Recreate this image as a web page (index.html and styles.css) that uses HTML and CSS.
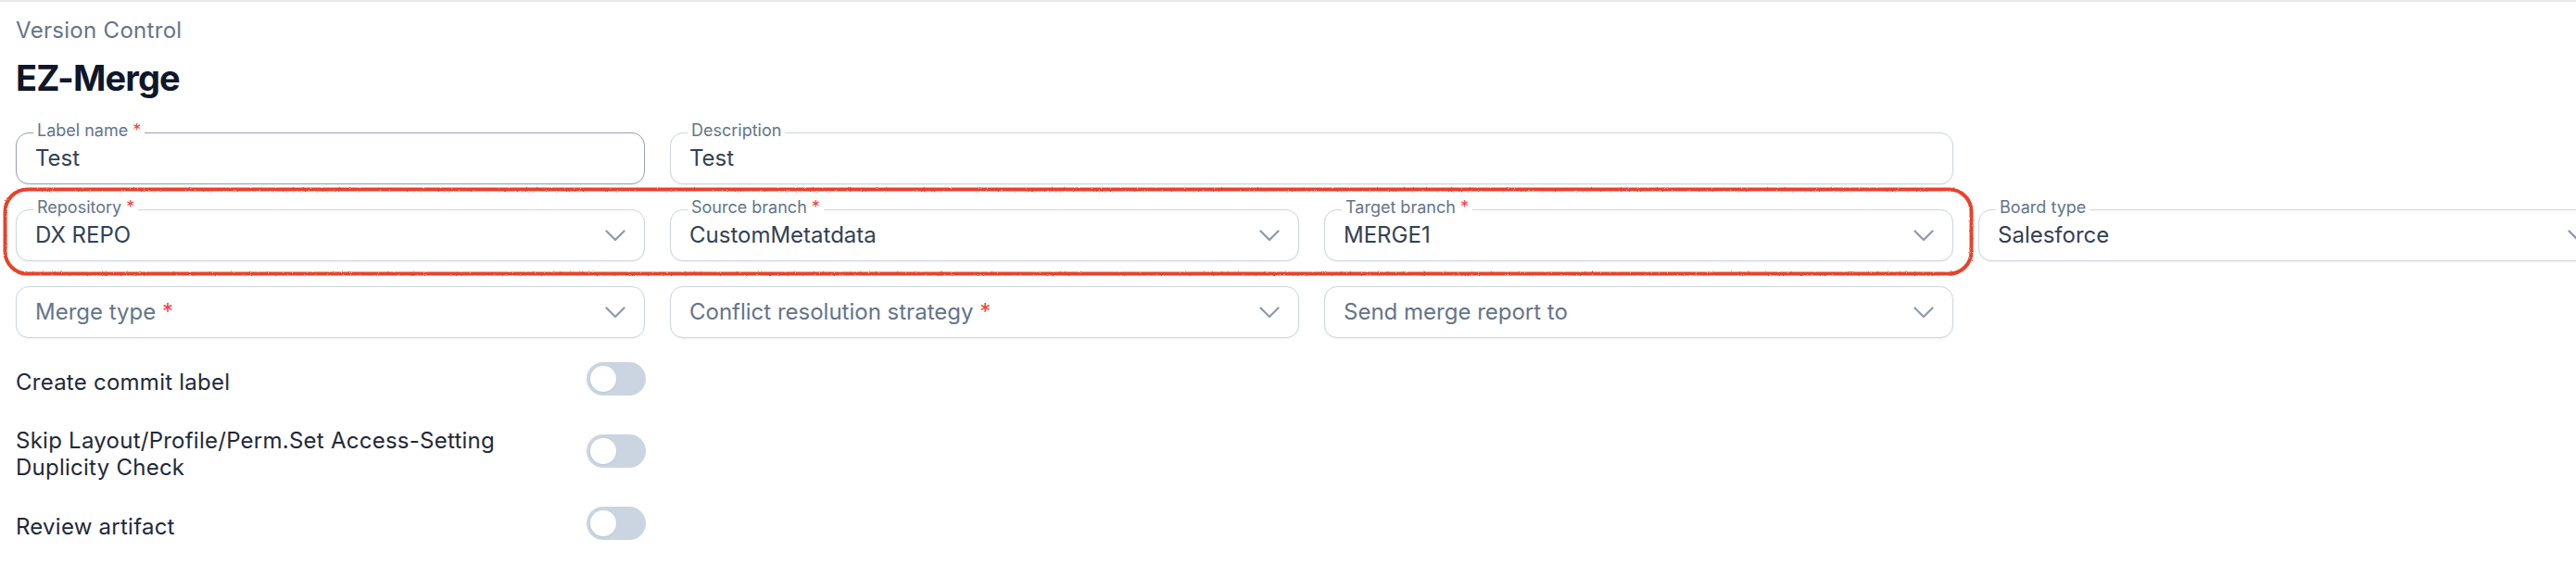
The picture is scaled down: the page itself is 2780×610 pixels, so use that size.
FILE: index.html
```html
<!DOCTYPE html>
<html lang="en">
<head>
<meta charset="utf-8">
<title>EZ-Merge</title>
<link rel="stylesheet" href="styles.css">
</head>
<body>
<div class="page">
  <div class="crumb">Version Control</div>
  <h1 class="title">EZ-Merge</h1>

  <div class="grid">
    <div class="field field-active">
      <span class="flabel">Label name <em>*</em></span>
      <span class="value">Test</span>
    </div>
    <div class="field span2">
      <span class="flabel">Description</span>
      <span class="value">Test</span>
    </div>

    <div class="field newrow">
      <span class="flabel">Repository <em>*</em></span>
      <span class="value">DX REPO</span>
      <svg class="chev" viewBox="0 0 22 13" width="22" height="13"><path d="M1.5 1.5 L11 11 L20.5 1.5"/></svg>
    </div>
    <div class="field">
      <span class="flabel">Source branch <em>*</em></span>
      <span class="value">CustomMetatdata</span>
      <svg class="chev" viewBox="0 0 22 13" width="22" height="13"><path d="M1.5 1.5 L11 11 L20.5 1.5"/></svg>
    </div>
    <div class="field">
      <span class="flabel">Target branch <em>*</em></span>
      <span class="value">MERGE1</span>
      <svg class="chev" viewBox="0 0 22 13" width="22" height="13"><path d="M1.5 1.5 L11 11 L20.5 1.5"/></svg>
    </div>
    <div class="field">
      <span class="flabel">Board type</span>
      <span class="value">Salesforce</span>
      <svg class="chev" viewBox="0 0 22 13" width="22" height="13"><path d="M1.5 1.5 L11 11 L20.5 1.5"/></svg>
    </div>

    <div class="field newrow">
      <span class="placeholder">Merge type <em>*</em></span>
      <svg class="chev" viewBox="0 0 22 13" width="22" height="13"><path d="M1.5 1.5 L11 11 L20.5 1.5"/></svg>
    </div>
    <div class="field">
      <span class="placeholder">Conflict resolution strategy <em>*</em></span>
      <svg class="chev" viewBox="0 0 22 13" width="22" height="13"><path d="M1.5 1.5 L11 11 L20.5 1.5"/></svg>
    </div>
    <div class="field">
      <span class="placeholder">Send merge report to</span>
      <svg class="chev" viewBox="0 0 22 13" width="22" height="13"><path d="M1.5 1.5 L11 11 L20.5 1.5"/></svg>
    </div>
  </div>

  <div class="toggles">
    <div class="trow">
      <span class="tlabel">Create commit label</span>
      <span class="switch"><span class="knob"></span></span>
    </div>
    <div class="trow">
      <span class="tlabel">Skip Layout/Profile/Perm.Set Access-Setting Duplicity Check</span>
      <span class="switch"><span class="knob"></span></span>
    </div>
    <div class="trow">
      <span class="tlabel">Review artifact</span>
      <span class="switch"><span class="knob"></span></span>
    </div>
  </div>

  <svg class="annot" viewBox="0 0 2128 96" width="2128" height="96">
    <defs>
      <filter id="rough" x="-1%" y="-10%" width="102%" height="120%">
        <feTurbulence type="fractalNoise" baseFrequency="0.9" numOctaves="2" seed="3" result="n"/>
        <feDisplacementMap in="SourceGraphic" in2="n" scale="2.2"/>
      </filter>
    </defs>
    <rect x="2.5" y="2.5" width="2122" height="91" rx="24" ry="24" filter="url(#rough)"/>
  </svg>
</div>
</body>
</html>
```

FILE: styles.css
```css
html, body {
  margin: 0;
  padding: 0;
  background: #ffffff;
  overflow: hidden;
}

body {
  font-family: "Inter", "Noto Sans", "Liberation Sans", sans-serif;
  border-top: 2px solid #e6e8ec;
}

.page {
  position: relative;
  padding: 15px 0 0 17px;
}

.crumb {
  font-size: 24px;
  line-height: 32px;
  color: #64748b;
  letter-spacing: 0.3px;
}

.title {
  margin: 11px 0 0;
  font-size: 38px;
  line-height: 48px;
  font-weight: 700;
  color: #0f172a;
  letter-spacing: -0.9px;
}

.grid {
  margin-top: 35px;
  display: grid;
  grid-template-columns: repeat(4, 679px);
  grid-auto-rows: 56px;
  column-gap: 27px;
  row-gap: 27px;
}

.span2 {
  grid-column: span 2;
}

.newrow {
  grid-column-start: 1;
}

.field {
  position: relative;
  box-sizing: border-box;
  height: 56px;
  border: 1px solid #cbd5e1;
  border-radius: 14px;
  background: #ffffff;
  box-shadow: 0 1px 2px rgba(15, 23, 42, 0.06);
  display: flex;
  align-items: center;
  justify-content: space-between;
  padding: 0 20px;
}

.field-active {
  border-color: #94a3b8;
}

.flabel {
  position: absolute;
  top: -14px;
  left: 18px;
  padding: 0 4px;
  background: #ffffff;
  font-size: 18px;
  line-height: 22px;
  color: #64748b;
  white-space: nowrap;
}

.flabel em,
.placeholder em {
  font-style: normal;
  color: #ef4444;
}

.value {
  font-size: 24px;
  line-height: 30px;
  color: #334155;
  white-space: nowrap;
}

.placeholder {
  font-size: 24px;
  line-height: 30px;
  color: #64748b;
  white-space: nowrap;
}

.chev {
  flex: none;
  fill: none;
  stroke: #8f9bb0;
  stroke-width: 2.3;
  stroke-linecap: round;
  stroke-linejoin: round;
}

.toggles {
  margin-top: 26px;
  width: 680px;
  display: flex;
  flex-direction: column;
  gap: 28px;
}

.trow {
  display: flex;
  align-items: center;
  justify-content: space-between;
  gap: 56px;
}

.tlabel {
  flex: 1;
  padding-top: 6px;
  font-size: 24px;
  line-height: 29px;
  color: #1e293b;
  letter-spacing: 0.25px;
}

.switch {
  flex: none;
  box-sizing: border-box;
  width: 64px;
  height: 36px;
  border-radius: 18px;
  background: #cbd5e1;
  display: flex;
  align-items: center;
  padding: 0 4px;
}

.knob {
  width: 28px;
  height: 28px;
  border-radius: 50%;
  background: #ffffff;
  box-shadow: 0 1px 2px rgba(15, 23, 42, 0.08);
}

.annot {
  position: absolute;
  left: 3px;
  top: 200px;
  fill: none;
  stroke: #e8432b;
  stroke-width: 4;
  pointer-events: none;
}
```
